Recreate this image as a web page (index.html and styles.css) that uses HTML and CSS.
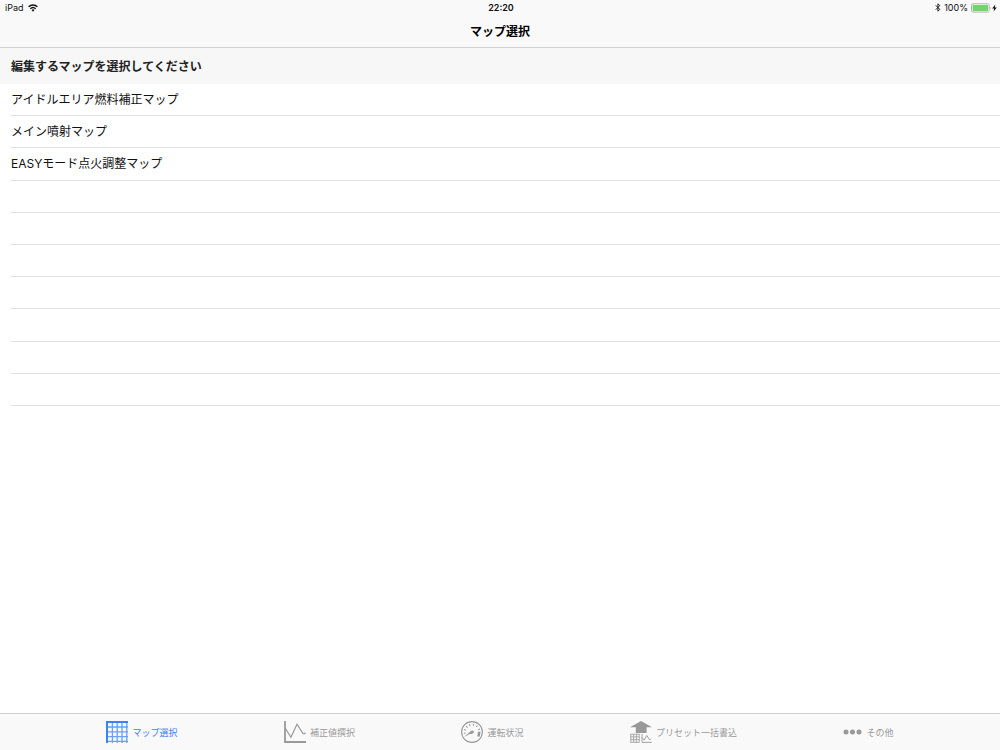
FILE: index.html
```html
<!DOCTYPE html>
<html lang="ja">
<head>
<meta charset="utf-8">
<meta name="viewport" content="width=device-width, initial-scale=1">
<title>マップ選択</title>
<link rel="stylesheet" href="styles.css">
</head>
<body>
<header class="top">
  <div class="status">
    <div class="status-left">
      <span>iPad</span>
      <svg class="wifi" viewBox="0 0 10 8" aria-hidden="true"><path d="M.6 2.8a6.3 6.3 0 0 1 8.8 0M2.3 4.7a3.9 3.9 0 0 1 5.4 0" fill="none" stroke="#111" stroke-width="1.4"/><path d="M3.5 6a2.2 2.2 0 0 1 3 0L5 7.7z" fill="#111"/></svg>
    </div>
    <span class="clock">22:20</span>
    <div class="status-right">
      <svg class="bluetooth" viewBox="0 0 6 9" aria-hidden="true"><path d="M.8 2.4l4 4L2.9 8.2V.8l1.9 1.8-4 4" fill="none" stroke="#222" stroke-width="1"/></svg>
      <span>100%</span>
      <span class="power">
        <svg class="battery" viewBox="0 0 20 10" aria-hidden="true"><rect x=".5" y=".8" width="17.6" height="8.2" rx="1.5" fill="#fff" stroke="#9a9a9a" stroke-width=".8"/><rect x="1.6" y="1.9" width="15.4" height="6" rx=".6" fill="#70d66c"/><path d="M19 3.4q1 1.5 0 3z" fill="#9a9a9a"/></svg>
        <svg class="bolt" viewBox="0 0 5 8" aria-hidden="true"><path d="M3.3.6L.2 4.4h1.9L1.6 7.4l3.2-3.9H2.8z" fill="#111"/></svg>
      </span>
    </div>
  </div>
  <h1 class="title">マップ選択</h1>
</header>
<main class="content">
  <h2 class="section">編集するマップを選択してください</h2>
  <ul class="list">
    <li class="row"><button class="row-button" type="button">アイドルエリア燃料補正マップ</button></li>
    <li class="row"><button class="row-button" type="button">メイン噴射マップ</button></li>
    <li class="row"><button class="row-button" type="button">EASYモード点火調整マップ</button></li>
    <li class="row"></li>
    <li class="row"></li>
    <li class="row"></li>
    <li class="row"></li>
    <li class="row"></li>
    <li class="row"></li>
    <li class="row"></li>
  </ul>
</main>
<nav class="tabs">
  <button class="tab active" type="button">
    <svg class="icon" viewBox="0 0 22 22" aria-hidden="true"><path d="M0 1h22M1 0v22" stroke="currentColor" stroke-width="2"/><path d="M0 6h22M0 10.8h22M0 15.6h22M0 20.4h22M6.4 0v22M11.2 0v22M16 0v22M20.8 0v22" stroke="currentColor" stroke-width="1.3" opacity=".75"/></svg>
    <span>マップ選択</span>
  </button>
  <button class="tab" type="button">
    <svg class="icon" viewBox="0 0 22 22" aria-hidden="true"><path d="M1 0v21h21" fill="none" stroke="currentColor" stroke-width="1.8"/><path d="M1.5 7.5l5.4 8.7 6.1-13 6 9.3q1 .8 2.7-.9" fill="none" stroke="currentColor" stroke-width="1.2"/></svg>
    <span>補正値撰択</span>
  </button>
  <button class="tab" type="button">
    <svg class="icon" viewBox="0 0 22 22" aria-hidden="true"><circle cx="11" cy="11" r="10.4" fill="none" stroke="currentColor" stroke-width="1.1"/><path d="M2.8 12.2l1.8-.2M3 8.6l1.9.7M5.1 5.2l1.4 1.4M8.3 3.1l.7 1.9M12.6 2.9l-.2 1.9M16.4 4.5l-1.2 1.5M19 7.9l-1.8.8" stroke="currentColor" stroke-width="1.1"/><path d="M3.2 16l6.6-5.9q2-1.2 3 .1.6 1.5-1 2.4-1.3.7-2.6.2z" fill="currentColor"/><path d="M17 10.8h2.6l-.8 4.8h-2.5z" fill="currentColor"/></svg>
    <span>運転状況</span>
  </button>
  <button class="tab" type="button">
    <svg class="icon" viewBox="0 0 22 22" aria-hidden="true"><path d="M11 0l11 6.2h-5.4V12H5.8V6.2H0z" fill="currentColor"/><path d="M.4 13.2h9M.4 15.9h9M.4 18.6h9M.4 21.3h9M.8 13v8.5M3.6 13v8.5M6.4 13v8.5M9.2 13v8.5" stroke="currentColor" stroke-width=".8"/><path d="M12 13v8.4h9.8M12 16.5l2.2 2.6 2.6-4.6 2.6 4.2 1.8-.8" fill="none" stroke="currentColor" stroke-width=".9"/></svg>
    <span>プリセット一括書込</span>
  </button>
  <button class="tab" type="button">
    <svg class="dots" viewBox="0 0 19 6" aria-hidden="true"><g fill="currentColor"><circle cx="3" cy="3" r="2.5"/><circle cx="9.5" cy="3" r="2.5"/><circle cx="16" cy="3" r="2.5"/></g></svg>
    <span>その他</span>
  </button>
</nav>
</body>
</html>
```
FILE: styles.css
```css
* {
  box-sizing: border-box;
}

body {
  margin: 0;
  min-height: 100vh;
  display: flex;
  flex-direction: column;
  background: #fff;
  color: #111;
  font-family: Inter, "Noto Sans CJK JP", sans-serif;
}

button {
  margin: 0;
  padding: 0;
  border: 0;
  background: none;
  color: inherit;
  font: inherit;
}

.top {
  background: #f9f9f9;
  border-bottom: 1px solid #d2d2d2;
}

.status {
  display: grid;
  grid-template-columns: 1fr auto 1fr;
  align-items: center;
  padding: 0 3px 0 5px;
  font-size: 9px;
  line-height: 15px;
}

.status-left,
.status-right,
.power {
  display: flex;
  align-items: center;
}

.status-left {
  gap: 4px;
}

.status-right {
  justify-content: flex-end;
  gap: 3px;
}

.power {
  gap: 1px;
}

.clock {
  font-weight: 600;
}

.wifi {
  width: 10px;
  height: 8px;
}

.bluetooth {
  width: 6px;
  height: 9px;
}

.battery {
  width: 20px;
  height: 10px;
}

.bolt {
  width: 5px;
  height: 8px;
}

.title {
  margin: 0;
  padding-top: 2px;
  font-size: 12px;
  line-height: 30px;
  font-weight: 700;
  text-align: center;
  color: #000;
}

.content {
  flex: 1;
}

.section {
  margin: 0;
  padding: 2px 11px 0;
  background: #f7f7f7;
  font-size: 12px;
  line-height: 34px;
  font-weight: 700;
  color: #222;
}

.list {
  display: grid;
  grid-auto-rows: 1fr;
  min-height: 322px;
  margin: 0;
  padding: 0 0 0 11px;
  list-style: none;
}

.row {
  display: flex;
  border-bottom: 1px solid #e0e0e0;
}

.row-button {
  flex: 1;
  padding-top: 1px;
  font-size: 12px;
  line-height: 30px;
  text-align: left;
}

.tabs {
  display: flex;
  justify-content: space-evenly;
  height: 37px;
  border-top: 1px solid #d2d2d2;
  background: #f9f9f9;
}

.tab {
  display: flex;
  align-items: center;
  gap: 4px;
  font-size: 9px;
  color: #999;
}

.active {
  color: #3d82f5;
}

.icon {
  width: 22px;
  height: 22px;
}

.dots {
  width: 19px;
  height: 6px;
}
```
